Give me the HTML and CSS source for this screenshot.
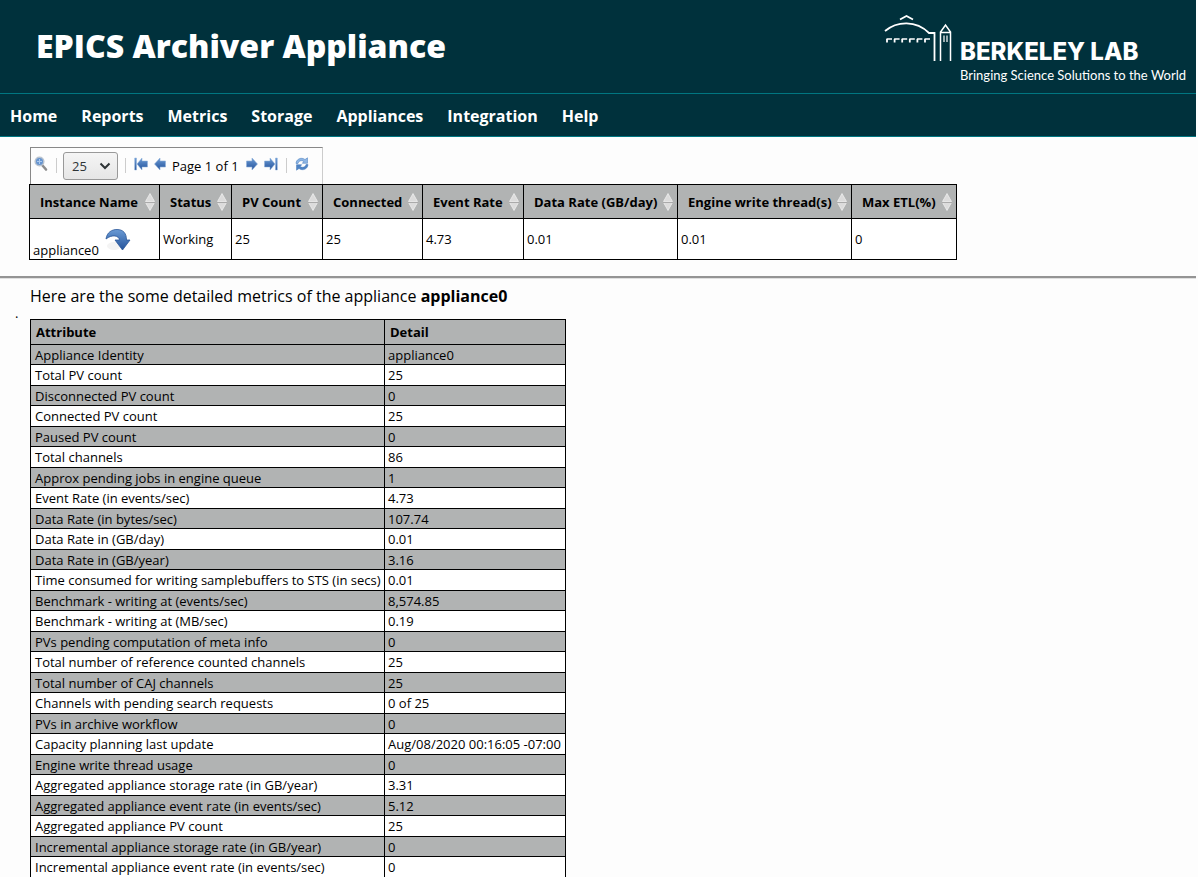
FILE: index.html
```
<!DOCTYPE html>
<html lang="en">
<head>
<meta charset="utf-8">
<title>EPICS Archiver Appliance</title>
<link rel="stylesheet" href="styles.css">
</head>
<body>
<svg class="defs" aria-hidden="true">
  <linearGradient id="blue" x1="0" y1="0" x2="0" y2="1"><stop offset="0" stop-color="#6b9bd5"/><stop offset="1" stop-color="#24539b"/></linearGradient>
  <symbol id="sort" viewBox="0 0 10 18"><path d="M5 0.500L9.500 8.500H0.500ZM5 17.500L9.500 9.500H0.500Z" fill="#dcdcdc" stroke="#f4f4f4" stroke-width=".7"/><path d="M0 9.500H10" stroke="#aaa"/></symbol>
  <symbol id="arrow" viewBox="0 0 12 14"><path d="M0.500 4H6V1L11.500 7L6 13V10H0.500Z" fill="url(#blue)" stroke="#8fb0da" stroke-width=".6"/></symbol>
  <symbol id="last" viewBox="0 0 14 14"><path d="M0.500 4H6V1L11 7L6 13V10H0.500ZM11.500 1H13.300V13H11.500Z" fill="url(#blue)" stroke="#8fb0da" stroke-width=".5"/></symbol>
</svg>
<header class="banner">
  <h1>EPICS Archiver Appliance</h1>
  <div class="lab">
    <svg class="building" viewBox="0 0 68 48" fill="none" stroke="#fff">
      <path d="M1 16C13 6 32 5 45 18H50.500V46M16 4.500L22.500 1L29 4.500" stroke-width="1.800"/>
      <path d="M56.500 46V17L61.500 10L66.500 17V46M56.500 17.500H66.500" stroke-width="1.500"/>
      <path d="M60 20.500V27M63 20.500V27" stroke-width="1.200"/>
      <path d="M2.500 24H46" stroke-width="1.600" stroke-dasharray="5.500 2.100"/>
      <path d="M3 24V27.500M10.600 24V27.500M18.200 24V27.500M25.800 24V27.500M33.400 24V27.500M41 24V27.500" stroke-width="1.800"/>
    </svg>
    <div class="lab-text"><strong>BERKELEY LAB</strong><span>Bringing Science Solutions to the World</span></div>
  </div>
</header>
<nav class="menu">
  <a href="#">Home</a><a href="#">Reports</a><a href="#">Metrics</a><a href="#">Storage</a><a href="#">Appliances</a><a href="#">Integration</a><a href="#">Help</a>
</nav>
<main>
  <section class="summary">
    <div class="pager">
      <button class="search" aria-label="Search"><svg width="14" height="16" viewBox="0 0 14 16"><path d="M8.500 9.500L12 13.500" stroke="#8d8d8d" stroke-width="2.600" stroke-linecap="round"/><circle cx="5.500" cy="5.500" r="4.300" fill="#6795d0" stroke="#b9c3cf" stroke-width="1.500"/><path d="M3 5.500H8M5.500 3V8" stroke="#a9c8ee"/></svg></button>
      <label class="size"><select aria-label="Rows per page"><option>25</option></select><svg width="12" height="8" viewBox="0 0 12 8"><path d="M1.500 1.500L6 6L10.500 1.500" fill="none" stroke="#2e3436" stroke-width="2"/></svg></label>
      <span class="pages">
        <button aria-label="First page"><svg class="flip" width="14" height="14"><use href="#last"/></svg></button>
        <button aria-label="Previous page"><svg class="flip" width="12" height="14"><use href="#arrow"/></svg></button>
        <span>Page 1 of 1</span>
        <button aria-label="Next page"><svg width="12" height="14"><use href="#arrow"/></svg></button>
        <button aria-label="Last page"><svg width="14" height="14"><use href="#last"/></svg></button>
      </span>
      <button class="refresh" aria-label="Refresh"><svg width="14" height="14" viewBox="0 0 14 14" stroke="#4378bb" stroke-width=".5" fill="#8db5e4"><path d="M1 6.500C1 2.500 6 -.5 10 2.500L12.500 .8V6.300H7.300L8.800 4.500C6.500 2.800 3.500 4 3 6.500Z"/><path d="M13 7.500C13 11.500 8 14.500 4 11.500L1.500 13.200V7.700H6.700L5.200 9.500C7.500 11.200 10.500 10 11 7.500Z" fill="#4f83c4"/></svg></button>
    </div>
    <table class="appliances">
      <colgroup><col class="c-name"><col class="c-status"><col class="c-count"><col class="c-conn"><col class="c-event"><col class="c-data"><col class="c-engine"><col class="c-etl"></colgroup>
      <thead><tr>
        <th><span>Instance Name<svg><use href="#sort"/></svg></span></th>
        <th><span>Status<svg><use href="#sort"/></svg></span></th>
        <th><span>PV Count<svg><use href="#sort"/></svg></span></th>
        <th><span>Connected<svg><use href="#sort"/></svg></span></th>
        <th><span>Event Rate<svg><use href="#sort"/></svg></span></th>
        <th><span>Data Rate (GB/day)<svg><use href="#sort"/></svg></span></th>
        <th><span>Engine write thread(s)<svg><use href="#sort"/></svg></span></th>
        <th><span>Max ETL(%)<svg><use href="#sort"/></svg></span></th>
      </tr></thead>
      <tbody><tr>
        <td class="name"><a class="detail" href="#metrics">appliance0<svg width="26" height="24" viewBox="0 0 26 24"><ellipse cx="9" cy="18" rx="7" ry="4" fill="#f4f4f4"/><path d="M1 11C2 4 7 1.500 12 1.500C18 1.500 21.500 5 21.500 12H25L17.500 22L10 12H14.500C14 7.500 7 6 1 11Z" fill="url(#blue)" stroke="#2a5799" stroke-width=".8"/></svg></a></td>
        <td>Working</td><td>25</td><td>25</td><td>4.73</td><td>0.01</td><td>0.01</td><td>0</td>
      </tr></tbody>
    </table>
  </section>
  <hr>
  <section class="metrics" id="metrics">
    <span class="dot">.</span>
    <div>
      <p>Here are the some detailed metrics of the appliance <b>appliance0</b></p>
      <table class="details">
        <colgroup><col class="c-attr"><col class="c-value"></colgroup>
        <thead><tr><th>Attribute</th><th>Detail</th></tr></thead>
        <tbody>
          <tr><td>Appliance Identity</td><td>appliance0</td></tr>
          <tr><td>Total PV count</td><td>25</td></tr>
          <tr><td>Disconnected PV count</td><td>0</td></tr>
          <tr><td>Connected PV count</td><td>25</td></tr>
          <tr><td>Paused PV count</td><td>0</td></tr>
          <tr><td>Total channels</td><td>86</td></tr>
          <tr><td>Approx pending jobs in engine queue</td><td>1</td></tr>
          <tr><td>Event Rate (in events/sec)</td><td>4.73</td></tr>
          <tr><td>Data Rate (in bytes/sec)</td><td>107.74</td></tr>
          <tr><td>Data Rate in (GB/day)</td><td>0.01</td></tr>
          <tr><td>Data Rate in (GB/year)</td><td>3.16</td></tr>
          <tr><td>Time consumed for writing samplebuffers to STS (in secs)</td><td>0.01</td></tr>
          <tr><td>Benchmark - writing at (events/sec)</td><td>8,574.85</td></tr>
          <tr><td>Benchmark - writing at (MB/sec)</td><td>0.19</td></tr>
          <tr><td>PVs pending computation of meta info</td><td>0</td></tr>
          <tr><td>Total number of reference counted channels</td><td>25</td></tr>
          <tr><td>Total number of CAJ channels</td><td>25</td></tr>
          <tr><td>Channels with pending search requests</td><td>0 of 25</td></tr>
          <tr><td>PVs in archive workflow</td><td>0</td></tr>
          <tr><td>Capacity planning last update</td><td>Aug/08/2020 00:16:05 -07:00</td></tr>
          <tr><td>Engine write thread usage</td><td>0</td></tr>
          <tr><td>Aggregated appliance storage rate (in GB/year)</td><td>3.31</td></tr>
          <tr><td>Aggregated appliance event rate (in events/sec)</td><td>5.12</td></tr>
          <tr><td>Aggregated appliance PV count</td><td>25</td></tr>
          <tr><td>Incremental appliance storage rate (in GB/year)</td><td>0</td></tr>
          <tr><td>Incremental appliance event rate (in events/sec)</td><td>0</td></tr>
        </tbody>
      </table>
    </div>
  </section>
</main>
</body>
</html>
```
FILE: styles.css
```
html { height: 100%; overflow: hidden; background: #fdfdfd; }
body { margin: 0 2px 0 0; height: 100%; overflow: hidden; font: 13px/18px "Open Sans", "Noto Sans", sans-serif; color: #000; }
.defs { position: absolute; width: 0; height: 0; }
button { border: 0; padding: 0; background: none; display: flex; }
.banner { display: flex; justify-content: space-between; background: #00313c; border-bottom: 1px solid #007681; color: #fff; height: 93px; padding: 0 16px 0 36px; }
.banner h1 { margin: 24px 0 0; font-size: 32px; line-height: 44px; font-weight: 800; white-space: nowrap; }
.lab { display: flex; gap: 8px; padding-top: 15px; }
.building { width: 68px; height: 48px; }
.lab-text { display: flex; flex-direction: column; width: 220px; padding-top: 22px; }
.lab-text strong { font: 800 24px/30px Inter, sans-serif; }
.lab-text span { font: 13px/16px Lato, sans-serif; white-space: nowrap; }
.menu { display: flex; gap: 24px; background: #00313c; border-bottom: 1px solid #007681; padding: 10px; height: 22px; }
.menu a { color: #fff; text-decoration: none; font-size: 16px; line-height: 24px; font-weight: 700; }
.summary { padding: 10px 0 0 29px; }
.pager { display: flex; box-sizing: border-box; width: 293px; height: 37px; margin-left: 1px; border: 1px solid #888; border-right-color: #ccc; border-bottom: 0; padding: 4px 0 0 3px; }
.search { margin-top: 4px; height: 16px; padding-right: 8px; }
.size { position: relative; border-left: 1px solid #ccc; padding-left: 6px; margin-top: 6px; height: 15px; }
.size select { appearance: none; width: 55px; height: 28px; margin: -6px 0 0; padding: 0 8px; border: 1px solid #999; border-radius: 3px; background: linear-gradient(#f5f5f5, #e6e6e6); font: inherit; color: #2e3436; display: block; }
.size svg { position: absolute; right: 7px; top: 4px; pointer-events: none; }
.pages { display: flex; gap: 6px; margin: 6px 0 0 7px; height: 15px; border: 1px solid #ccc; border-width: 0 1px; padding: 0 8px; }
.pages button { margin-top: -1px; height: 14px; }
.pages span { white-space: nowrap; margin: -1px 1px 0 0; }
.flip { transform: scaleX(-1); }
.refresh { margin: 5px 0 0 8px; height: 14px; }
table { border-collapse: collapse; table-layout: fixed; }
th { background: #b1b3b3; font-weight: 700; text-align: left; }
th, td { border: 1px solid #000; padding: 0 3px; white-space: nowrap; }
.appliances { width: 928px; }
.appliances td { background: #fff; }
.appliances th { height: 33px; padding: 0 4px 0 10px; }
.appliances th span { display: flex; justify-content: space-between; align-items: center; }
.appliances th svg { width: 10px; height: 18px; }
.appliances tbody td { height: 40px; }
.appliances .name { vertical-align: bottom; }
.c-name { width: 130px; } .c-status { width: 72px; } .c-count { width: 91px; } .c-conn { width: 100px; }
.c-event { width: 101px; } .c-data { width: 154px; } .c-engine { width: 174px; } .c-etl { width: 105px; }
.detail { display: flex; align-items: flex-end; gap: 6px; color: #000; text-decoration: none; line-height: 18px; }
.detail svg { margin-bottom: 7px; }
hr { margin: 16px 0 0; border: 0; border-top: 2px solid #949494; border-bottom: 1px solid #e0e0e0; }
.metrics { display: flex; padding: 5px 0 0 15px; }
.dot { width: 15px; padding-top: 20px; }
.metrics p { margin: 0 0 11px; font-size: 16px; line-height: 24px; }
.details { width: 536px; }
.c-attr { width: 354px; } .c-value { width: 181px; }
.details th { height: 24px; padding: 0 5px; }
.details td { height: 20px; line-height: 18px; }
.details td:first-child { padding-left: 4px; }
.details tbody tr:nth-child(odd) td { height: 19px; background: #b1b3b3; }
.details tbody tr:nth-child(even) td { background: #fff; }
```
